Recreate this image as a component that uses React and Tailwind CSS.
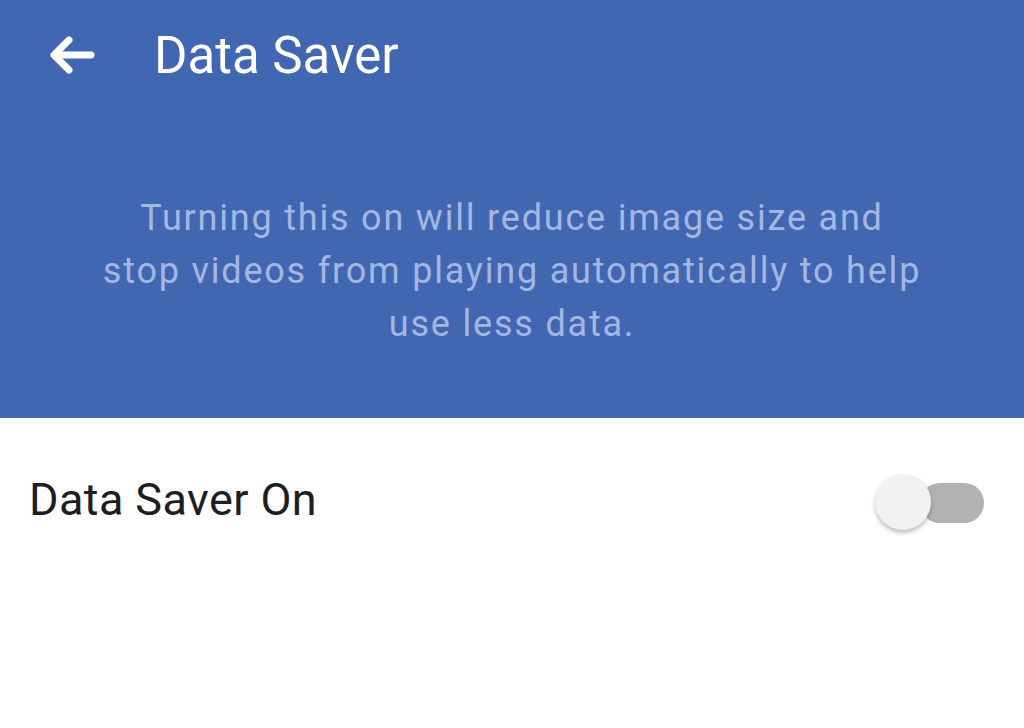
import { useState } from 'react';

const BackArrow = () => (
  <svg width="48" height="40" viewBox="0 0 48 40" fill="none">
    <path d="M43 20H7M21 5L6 20l15 15" stroke="#ffffff" strokeWidth="7" strokeLinecap="round" strokeLinejoin="round" />
  </svg>
);

const App = () => {
  const [on, setOn] = useState(false);

  return (
    <div className="w-[1024px] h-[728px] bg-white overflow-hidden" style={{ fontFamily: 'Roboto, "Noto Sans", sans-serif' }}>
      {/* blue header */}
      <div className="h-[418px] bg-[#4267b2] flex flex-col">
        <div className="h-[110px] flex items-center pl-[48px]">
          <BackArrow />
          <h1 className="ml-[58px] text-[51px] leading-none text-white font-normal">Data Saver</h1>
        </div>
        <p className="mt-[82px] text-center text-[36px] leading-[53px] tracking-[1.8px] text-[#a4b7e0]">
          Turning this on will reduce image size and<br />
          stop videos from playing automatically to help<br />
          use less data.
        </p>
      </div>

      {/* setting row */}
      <div className="h-[164px] flex items-center justify-between pl-[29px] pr-[40px]">
        <span className="text-[45px] leading-[52px] tracking-[0.4px] text-[#1c1e21]">Data Saver On</span>
        <button onClick={() => setOn(!on)} className="relative w-[109px] h-[58px] mt-[6px]">
          <span className={`absolute right-0 top-[9px] w-[64px] h-[40px] rounded-full ${on ? 'bg-[#9cb4d8]' : 'bg-[#b2b2b2]'}`}></span>
          <span className={`absolute top-0 w-[56px] h-[56px] rounded-full shadow-[0_3px_4px_rgba(0,0,0,0.25)] ${on ? 'right-0 bg-[#4267b2]' : 'left-0 bg-[#f1f1f1]'}`}></span>
        </button>
      </div>
    </div>
  );
};

export default App;
